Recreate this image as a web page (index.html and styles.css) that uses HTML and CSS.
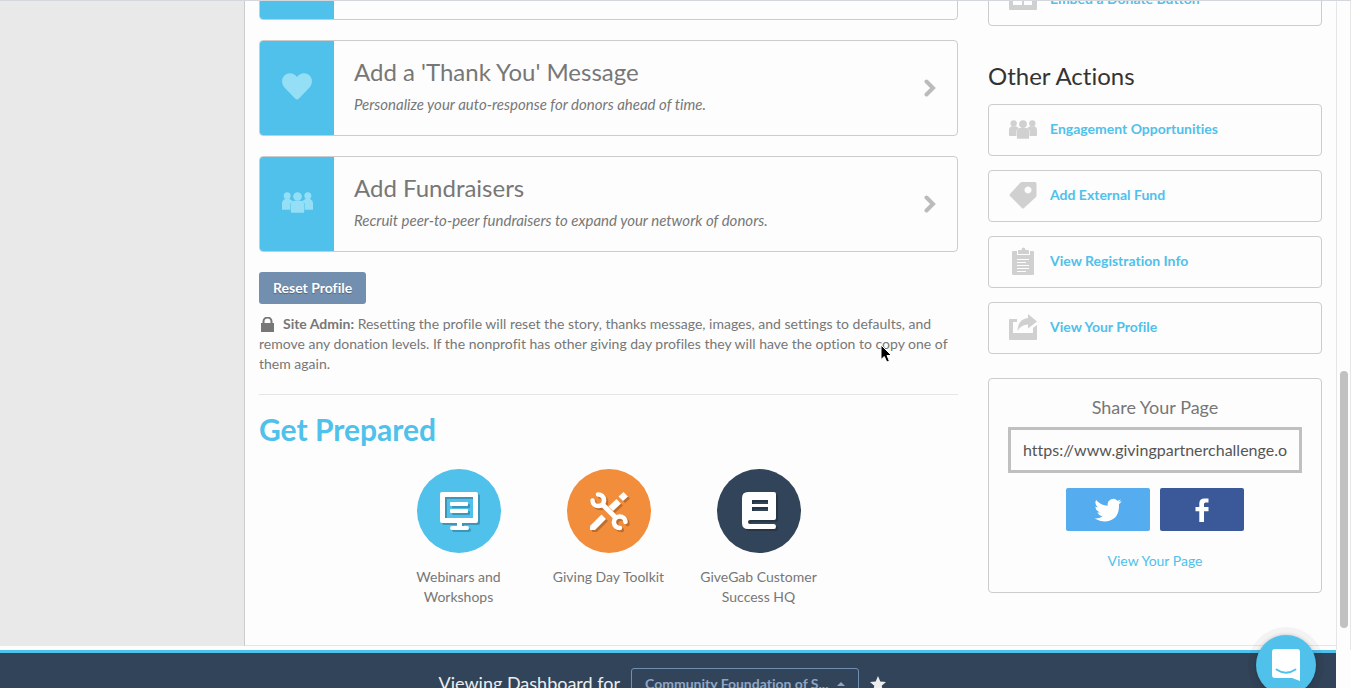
FILE: index.html
```html
<!DOCTYPE html>
<html lang="en">
<head>
<meta charset="utf-8">
<title>Giving Day Dashboard</title>
<link rel="stylesheet" href="styles.css">
</head>
<body>
<svg class="symbols" aria-hidden="true">
  <symbol id="people" viewBox="0 0 30 20">
    <circle cx="5" cy="3.4" r="3.4"/><circle cx="25" cy="3.4" r="3.4"/><circle cx="15" cy="4.200" r="4.200"/>
    <path d="M0 16.500V11q0-3.500 3-4.500h4q2.500.5 3.500 2.500L8 11v6H1q-1 0-1-.5z"/>
    <path d="M30 16.500V11q0-3.500-3-4.500h-4q-2.500.5-3.500 2.500L22 11v6H29q1 0 1-.5z"/>
    <path d="M8.500 19V12q0-3 3-3.700h7q3 .7 3 3.700v7q0 1-1 1h-11q-1 0-1-1z"/>
  </symbol>
  <symbol id="chevron" viewBox="0 0 12 18"><path d="M2.500 2.500L9 9l-6.500 6.500" fill="none" stroke="currentColor" stroke-width="4" stroke-linecap="round"/></symbol>
</svg>

<div class="app">
  <div class="viewport">
    <nav class="sidebar" aria-label="Dashboard"></nav>
    <main class="content">
      <div class="primary">
        <a class="task" href="#"><span class="task-icon"></span></a>
        <a class="task" href="#">
          <span class="task-icon"><svg width="30" height="27" viewBox="0 0 30 27"><path d="M15 26.500q-1 0-2-1L2.500 14.500C-1 10.500-.5 5 2.500 2.400 6-.8 11.500-.6 15 4c3.500-4.600 9-4.800 12.500-1.600 3 2.600 3.500 8.100 0 12.100L17 25.500q-1 1-2 1z"/></svg></span>
          <span class="task-body"><span class="task-title">Add a 'Thank You' Message</span><em class="task-note">Personalize your auto-response for donors ahead of time.</em></span>
          <svg class="chevron" width="12" height="18"><use href="#chevron"/></svg>
        </a>
        <a class="task" href="#">
          <span class="task-icon"><svg width="31" height="21"><use href="#people"/></svg></span>
          <span class="task-body"><span class="task-title">Add Fundraisers</span><em class="task-note">Recruit peer-to-peer fundraisers to expand your network of donors.</em></span>
          <svg class="chevron" width="12" height="18"><use href="#chevron"/></svg>
        </a>
        <button class="reset" type="button">Reset Profile</button>
        <p class="admin-note"><svg class="lock" width="16" height="15" viewBox="0 0 16 15"><path d="M2 6h13v9H2z"/><path d="M4.500 7V4.500a4 4 0 0 1 8 0V7" fill="none" stroke="currentColor" stroke-width="2"/></svg><strong>Site Admin:</strong> Resetting the profile will reset the story, thanks message, images, and settings to defaults, and remove any donation levels. If the nonprofit has other giving day profiles they will have the option to copy one of them again.</p>
        <hr class="rule">
        <h2 class="prepared-title">Get Prepared</h2>
        <div class="resources">
          <a class="resource" href="#">
            <span class="disc disc-blue"><svg width="84" height="84" viewBox="0 0 84 84"><g class="glyph"><path fill-rule="evenodd" d="M25 23h34q2 0 2 2v27q0 2-2 2H45v3h5q2 0 2 2t-2 2H35q-2 0-2-2t2-2h5v-3H25q-2 0-2-2V25q0-2 2-2zM28 28v21h28V28z"/><rect x="33" y="33" width="18" height="4" rx="1"/><rect x="33" y="40" width="18" height="4" rx="1"/></g></svg></span>
            <span>Webinars and Workshops</span>
          </a>
          <a class="resource" href="#">
            <span class="disc disc-orange"><svg width="84" height="84" viewBox="0 0 84 84"><g class="glyph"><path d="M23 57l11.500-11.500 4.500 4.500L28 61h-5z"/><path d="M56.500 23l4.500 4.500-5 4.500-4.500-4.500zM49.500 30l4.500 4.500-8 7.500-4.500-4.500z"/><path d="M35 35l14 14" fill="none" stroke="#fff" stroke-width="5"/><path d="M31 25.500a5.800 5.800 0 1 1-5.500 6M53 59a5.800 5.800 0 1 1 5.500-6" fill="none" stroke="#fff" stroke-width="4.500" stroke-linecap="round"/></g></svg></span>
            <span>Giving Day Toolkit</span>
          </a>
          <a class="resource" href="#">
            <span class="disc disc-navy"><svg width="84" height="84" viewBox="0 0 84 84"><g class="glyph"><path fill-rule="evenodd" d="M31 23h26q2 0 2 2v24q0 2-2 2H33q-2 0-2 2t2 2h24q2 0 2 2.500t-2 2.500H31q-6 0-6-6V29q0-6 6-6zM35 31v4h16v-4zM35 38v4h16v-4z"/></g></svg></span>
            <span>GiveGab Customer Success HQ</span>
          </a>
        </div>
      </div>

      <aside class="secondary">
        <a class="action" href="#"><svg width="28" height="22" viewBox="0 0 28 22"><path fill-rule="evenodd" d="M1 0h26q1 0 1 1v20q0 1-1 1H1q-1 0-1-1V1q0-1 1-1zM4 6v11h9V6zM15 6v5h8V6zM15 13v4h8v-4z"/></svg>Embed a Donate Button</a>
        <h2 class="aside-title">Other Actions</h2>
        <div class="actions">
          <a class="action" href="#"><svg width="28" height="19"><use href="#people"/></svg>Engagement Opportunities</a>
          <a class="action" href="#"><svg width="28" height="28" viewBox="0 0 28 28"><path fill-rule="evenodd" d="M13 1h13q1.500 0 1.500 1.500v12q0 1-1 2L15 27q-1 1-2 0L1 15q-1-1 0-2L11 2q1-1 2-1zM19 5.500a3.500 3.500 0 1 0 .01 0z"/></svg>Add External Fund</a>
          <a class="action" href="#"><svg width="28" height="28" viewBox="0 0 28 28"><path fill-rule="evenodd" d="M4 4h4v4h13V4h3q1 0 1 1v22q0 1-1 1H4q-1 0-1-1V5q0-1 1-1zM8 12v1h12v-1zM8 15v1h9v-1zM8 18v1h12v-1zM8 21v1h12v-1zM8 24v1h9v-1z"/><path d="M9 7V3.500q0-.5 1-.5h2.500q0-2.500 2-2.500t2 2.500H19q1 0 1 .5V7z"/></svg>View Registration Info</a>
          <a class="action" href="#"><svg width="28" height="28" viewBox="0 0 28 28"><path d="M1 6h7v3H4v11h20v-5l4-3v14q0 1-1 1H1q-1 0-1-1V7q0-1 1-1z"/><path d="M19 1l9 7.500-9 7V11.500q-7 0-10.500 6.500Q9 6 19 5z"/></svg>View Your Profile</a>
        </div>
        <section class="share">
          <label class="share-title" for="page-url">Share Your Page</label>
          <input class="share-url" id="page-url" type="text" value="https://www.givingpartnerchallenge.org">
          <div class="share-buttons">
            <button class="social twitter" type="button" aria-label="Share on Twitter"><svg width="28" height="24" viewBox="0 0 28 24"><path d="M27.500 3.300q-1.300.6-2.900.9 1.600-1 2.200-2.800-1.600.9-3.400 1.300A5.600 5.600 0 0 0 13.800 7.700Q6.800 7.400 2.100 1.900 0 6.300 3.900 9.300q-1.400 0-2.500-.7.200 4.300 4.500 5.600-1.100.3-2.500.1 1.200 3.600 5.200 3.900-3.500 2.700-8.100 2.300 11.700 6.400 20.600-1.100 3.900-3.900 3.900-11.700v-1.600q1.400-1 2.500-2.500z"/></svg></button>
            <button class="social facebook" type="button" aria-label="Share on Facebook"><svg width="14" height="24" viewBox="0 0 14 24"><path d="M13.500.4v4H10.500q-1.500 0-1.500 1.500V9h4.500v4.200H9V24H4.300V13.200H.5V9h3.800V5.500Q4.300.4 9.600.4z"/></svg></button>
          </div>
          <a class="share-link" href="#">View Your Page</a>
        </section>
      </aside>
    </main>
    <div class="scroll-track"><div class="scroll-thumb"></div></div>
  </div>
  <footer class="footer">
    <span class="footer-label">Viewing Dashboard for</span>
    <button class="org-picker" type="button">Community Foundation of S...<span class="caret"></span></button>
    <svg class="star" width="16" height="16" viewBox="0 0 16 16"><path d="M8 0l2.300 5.400 5.700.5-4.300 3.800 1.300 5.800-5-3-5 3 1.300-5.800L0 5.900l5.700-.5z"/></svg>
  </footer>
</div>

<button class="chat" type="button" aria-label="Open chat"><svg width="28" height="32" viewBox="0 0 28 32"><path fill="#fff" d="M3 0h22q3 0 3 3v29l-8-3H3q-3 0-3-3V3q0-3 3-3z"/><path d="M4.500 20.500q9.500 6.500 19 0" fill="none" stroke="#4fc1eb" stroke-width="1.800" stroke-linecap="round"/></svg></button>
<svg class="pointer" width="14" height="20" viewBox="0 0 14 20" aria-hidden="true"><path d="M1 1v14.500l3.300-3 2.500 5.500 2.600-1-2.400-5.500h4.500z" stroke="#fff"/></svg>
</body>
</html>
```

FILE: styles.css
```css
* { box-sizing: border-box; }
html, body { height: 100%; }
body {
  margin: 0;
  overflow: hidden;
  background: #fdfdfd;
  color: #777;
  font: 14px/20px Lato, "Liberation Sans", sans-serif;
  font-variant-ligatures: none;
}
a { color: #4fc1eb; text-decoration: none; }
button, input { font: inherit; font-variant-ligatures: none; }
svg { flex: none; fill: currentColor; }
h2, p { margin: 0; }
.symbols { position: absolute; width: 0; height: 0; }

.app { display: flex; flex-direction: column; height: 100vh; border-top: 1px solid #d4d7dc; }
.viewport { position: relative; flex: 1; display: flex; min-height: 0; padding-bottom: 4px; overflow: hidden; }
.sidebar { width: 245px; flex: none; background: #e9e9e9; border-right: 1px solid #ccc; }

.content {
  flex: 1;
  display: grid;
  grid-template-columns: minmax(0, 699fr) minmax(0, 334fr);
  gap: 30px;
  padding: 0 14px;
  border-bottom: 1px solid #e6e6e6;
  overflow: hidden;
}
/* Both columns are shown scrolled part of the way down. */
.primary { margin-top: -77px; }
.secondary { margin-top: -27px; }

.task {
  display: flex;
  align-items: center;
  height: 96px;
  margin-bottom: 20px;
  padding-right: 21px;
  border: 1px solid #ccc;
  border-radius: 4px;
  color: #777;
  overflow: hidden;
}
.task-icon {
  display: flex;
  align-items: center;
  justify-content: center;
  align-self: stretch;
  width: 74px;
  margin-right: 20px;
  padding-bottom: 4px;
  background: #4fc1eb;
  color: #94dff5;
}
.task-body { flex: 1; display: flex; flex-direction: column; gap: 6px; padding-bottom: 6px; }
.task-title { font-size: 24px; line-height: 32px; }
.task-note { font-size: 15px; }
.chevron { color: #bbb; }

.reset {
  height: 32px;
  padding: 0 14px;
  border: 0;
  border-radius: 3px;
  background: #738fb0;
  color: #fff;
  font-weight: 700;
  text-shadow: 0 1px 1px rgba(0, 0, 0, .3);
}
.admin-note { margin-top: 10px; }
.lock { margin-right: 8px; vertical-align: -3px; }
.rule { margin: 20px 0; border: 0; border-top: 1px solid #e6e6e6; }
.prepared-title { color: #4fc1eb; font-size: 30px; line-height: 28px; }
.resources { display: flex; justify-content: center; gap: 30px; margin-top: 26px; }
.resource { display: flex; flex-direction: column; align-items: center; gap: 14px; width: 120px; color: #777; text-align: center; }
.disc { width: 84px; height: 84px; border-radius: 50%; }
.disc svg { display: block; color: #fff; }
.glyph { filter: drop-shadow(2px 2px 0 rgba(0, 0, 0, .22)); }
.disc-blue { background: #4fc1eb; }
.disc-orange { background: #f28d3b; }
.disc-navy { background: #324459; }

.action {
  display: flex;
  align-items: center;
  gap: 13px;
  height: 52px;
  padding: 0 20px 2px;
  border: 1px solid #ccc;
  border-radius: 4px;
  font-weight: 700;
}
.action svg { color: #d0d0d0; }
.aside-title { margin: 34px 0 12px; color: #333; font-size: 24px; font-weight: 400; line-height: 32px; }
.actions { display: grid; gap: 14px; }

.share {
  display: flex;
  flex-direction: column;
  align-items: center;
  margin-top: 24px;
  padding: 17px 19px 21px;
  border: 1px solid #ccc;
  border-radius: 4px;
}
.share-title { font-size: 18px; line-height: 22px; }
.share-url {
  width: 100%;
  height: 46px;
  margin: 9px 0 15px;
  padding: 0 12px 2px;
  border: 3px solid #c0c0c0;
  background: #fdfdfd;
  color: #555;
  font-size: 16px;
}
.share-buttons { display: flex; gap: 10px; margin-bottom: 20px; }
.social { display: flex; align-items: center; justify-content: center; width: 84px; height: 43px; padding: 0; border: 0; border-radius: 2px; color: #fff; }
.twitter { background: #55acee; }
.facebook { background: #3b5998; }

.scroll-track { width: 15px; flex: none; border: solid #e6e6e6; border-width: 0 1px; margin-bottom: -4px; padding: 370px 2px 0 3px; }
.scroll-thumb { width: 8px; height: 257px; border-radius: 4px; background: #c1c1c1; }

.footer {
  display: flex;
  align-items: flex-start;
  justify-content: center;
  gap: 11px;
  height: 38px;
  margin-right: 15px;
  padding: 15px 12px 0 0;
  border-top: 3px solid #4fc1eb;
  background: #324459;
  color: #eee;
  overflow: hidden;
}
.footer-label { font-size: 18px; line-height: 30px; }
.org-picker {
  display: flex;
  align-items: center;
  gap: 8px;
  height: 32px;
  padding: 0 13px;
  border: 1px solid #738fb0;
  border-radius: 3px;
  background: none;
  color: #8ea6c4;
  font-weight: 700;
}
.caret { border: 4px solid transparent; border-top: 0; border-bottom-color: #8ea6c4; }
.star { margin-top: 8px; }

.chat {
  position: fixed;
  right: 35px;
  bottom: -7px;
  display: flex;
  align-items: center;
  justify-content: center;
  width: 60px;
  height: 60px;
  padding: 0;
  border: 0;
  border-radius: 50%;
  background: #4fc1eb;
  box-shadow: 0 0 0 8px rgba(0, 0, 0, .04), 0 0 4px rgba(0, 0, 0, .2);
}
.pointer { position: absolute; left: 880px; top: 344px; color: #000; }
```
